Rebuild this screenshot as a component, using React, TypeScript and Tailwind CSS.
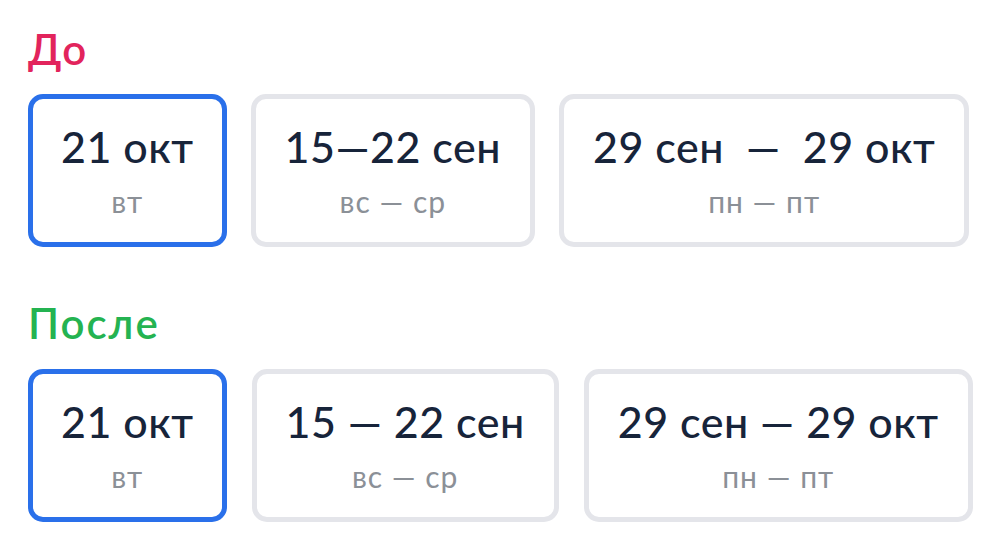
import React from "react";

type Item = { title: string; sub: string; active?: boolean };

const before: Item[] = [
  { title: "21 окт", sub: "вт", active: true },
  { title: "15—22 сен", sub: "вс — ср" },
  { title: "29 сен\u2002—\u200229 окт", sub: "пн — пт" },
];

const after: Item[] = [
  { title: "21 окт", sub: "вт", active: true },
  { title: "15 — 22 сен", sub: "вс — ср" },
  { title: "29 сен — 29 окт", sub: "пн — пт" },
];

function DateCard({ item }: { item: Item }) {
  return (
    <div
      className={
        item.active
          ? "h-[153px] px-[28px] flex flex-col items-center justify-center rounded-[15px] border-[5px] border-[#2a70ea] bg-white"
          : "h-[153px] px-[29px] flex flex-col items-center justify-center rounded-[15px] border-[5px] border-[#e4e5ea] bg-white"
      }
    >
      <div className="text-[43px] leading-none font-medium tracking-[0.5px] text-[#17243a] whitespace-nowrap">{item.title}</div>
      <div className="mt-[18px] text-[30px] leading-none tracking-[1px] text-[#8b9097] whitespace-nowrap">{item.sub}</div>
    </div>
  );
}

export default function App() {
  return (
    <div className="w-[992px] h-[546px] bg-white pl-[28px] pt-[28px] font-['Lato','Noto_Sans',sans-serif]">
      <h2 className="text-[42px] leading-none font-semibold tracking-[2px] text-[#e2245c]">До</h2>
      <div className="mt-[24px] flex gap-[24px]">
        {before.map((it) => (
          <DateCard key={it.title} item={it} />
        ))}
      </div>
      <h2 className="mt-[55px] text-[42px] leading-none font-semibold tracking-[2px] text-[#24b351]">После</h2>
      <div className="mt-[25px] flex gap-[25px]">
        {after.map((it) => (
          <DateCard key={it.title} item={it} />
        ))}
      </div>
    </div>
  );
}
